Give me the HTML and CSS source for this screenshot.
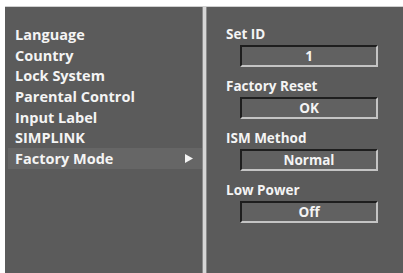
FILE: index.html
```html
<!DOCTYPE html>
<html lang="en">
<head>
  <meta charset="UTF-8">
  <title>Option Menu</title>
  <link rel="stylesheet" href="styles.css">
</head>
<body>
  <div class="ekran">
    <div class="menu">
      <div class="madde">Language</div>
      <div class="madde">Country</div>
      <div class="madde">Lock System</div>
      <div class="madde">Parental Control</div>
      <div class="madde">Input Label</div>
      <div class="madde">SIMPLINK</div>
      <div class="madde secili">Factory Mode
        <svg class="ok" width="8" height="9" viewBox="0 0 8 9"><path d="M0 0 L8 4.5 L0 9 Z" fill="#f4f4f4"/></svg>
      </div>
    </div>

    <div class="ayrac"></div>

    <div class="ayarlar">
      <div class="grup">
        <div class="etiket">Set ID</div>
        <div class="kutu">1</div>
      </div>
      <div class="grup">
        <div class="etiket">Factory Reset</div>
        <div class="kutu">OK</div>
      </div>
      <div class="grup">
        <div class="etiket">ISM Method</div>
        <div class="kutu">Normal</div>
      </div>
      <div class="grup">
        <div class="etiket">Low Power</div>
        <div class="kutu">Off</div>
      </div>
    </div>
  </div>
</body>
</html>
```

FILE: styles.css
```css
body {
  margin: 0;
  background: #ffffff;
  font-family: "Open Sans", "DejaVu Sans", sans-serif;
  font-weight: bold;
  color: #f4f4f4;
  overflow: hidden;
}

.ekran {
  display: flex;
  height: 267px;
  margin: 6px 0 0 5px;
  width: 398px;
  background: #5b5b5b;
  border-right: 3px solid #c8c8c8;
  border-top: 1px solid #d0d0d0;
}

.menu {
  width: 197px;
  padding-top: 17px;
  padding-left: 3px;
  box-sizing: border-box;
}

.madde {
  display: flex;
  align-items: center;
  height: 20.7px;
  padding-left: 7px;
  font-size: 14.5px;
}

.secili {
  background: #666666;
}

.secili .ok {
  margin-left: auto;
  margin-right: 9px;
}

.ayrac {
  width: 3px;
  background: #d6d6d6;
  border-left: 1px solid #8a8a8a;
  border-right: 1px solid #8a8a8a;
}

.ayarlar {
  flex: 1;
  padding: 17px 0 0 19px;
}

.grup {
  margin-bottom: 9px;
}

.etiket {
  font-size: 13.5px;
  height: 20px;
  line-height: 20px;
}

.kutu {
  box-sizing: border-box;
  width: 138px;
  height: 22px;
  margin-left: 14px;
  margin-top: 1px;
  background: #616161;
  border-top: 2px solid #1e1e1e;
  border-left: 2px solid #1e1e1e;
  border-bottom: 2px solid #c4c4c4;
  border-right: 2px solid #c4c4c4;
  text-align: center;
  font-size: 13.5px;
  line-height: 18px;
}
```
